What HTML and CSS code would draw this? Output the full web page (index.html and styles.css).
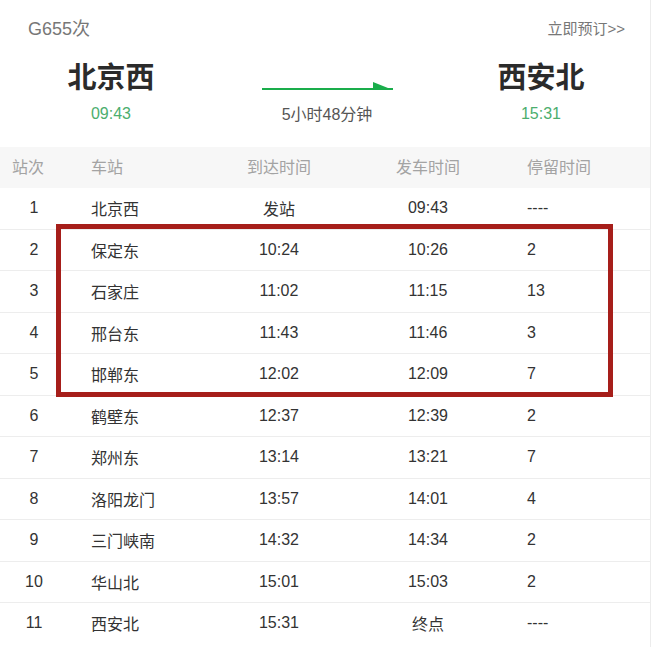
FILE: index.html
```html
<!DOCTYPE html>
<html lang="zh-CN">
<head>
    <meta charset="UTF-8">
    <meta name="viewport" content="width=device-width, initial-scale=1.0">
    <title>G655次 时刻表</title>
    <link rel="stylesheet" href="styles.css">
</head>
<body>
    <div class="panel">
        <div class="top-bar">
            <span class="train-no">G655次</span>
            <a class="book-link" href="#">立即预订&gt;&gt;</a>
        </div>

        <div class="route">
            <div class="station">
                <div class="station-name">北京西</div>
                <div class="station-time">09:43</div>
            </div>
            <div class="route-middle">
                <svg class="arrow" width="132" height="9" viewBox="0 0 132 9">
                    <rect x="0" y="6" width="131" height="2" fill="#1aad4b"/>
                    <polygon points="111,0 111,8 131,8" fill="#1aad4b"/>
                </svg>
                <div class="duration">5小时48分钟</div>
            </div>
            <div class="station">
                <div class="station-name">西安北</div>
                <div class="station-time">15:31</div>
            </div>
        </div>

        <div class="table-wrap">
            <table class="stops">
                <colgroup>
                    <col class="c-no">
                    <col class="c-name">
                    <col class="c-arr">
                    <col class="c-dep">
                    <col class="c-stay">
                </colgroup>
                <thead>
                    <tr>
                        <th class="no">站次</th>
                        <th class="name">车站</th>
                        <th class="mid">到达时间</th>
                        <th class="mid">发车时间</th>
                        <th class="stay">停留时间</th>
                    </tr>
                </thead>
                <tbody>
                    <tr><td class="no">1</td><td class="name">北京西</td><td class="mid">发站</td><td class="mid">09:43</td><td class="stay">----</td></tr>
                    <tr><td class="no">2</td><td class="name">保定东</td><td class="mid">10:24</td><td class="mid">10:26</td><td class="stay">2</td></tr>
                    <tr><td class="no">3</td><td class="name">石家庄</td><td class="mid">11:02</td><td class="mid">11:15</td><td class="stay">13</td></tr>
                    <tr><td class="no">4</td><td class="name">邢台东</td><td class="mid">11:43</td><td class="mid">11:46</td><td class="stay">3</td></tr>
                    <tr><td class="no">5</td><td class="name">邯郸东</td><td class="mid">12:02</td><td class="mid">12:09</td><td class="stay">7</td></tr>
                    <tr><td class="no">6</td><td class="name">鹤壁东</td><td class="mid">12:37</td><td class="mid">12:39</td><td class="stay">2</td></tr>
                    <tr><td class="no">7</td><td class="name">郑州东</td><td class="mid">13:14</td><td class="mid">13:21</td><td class="stay">7</td></tr>
                    <tr><td class="no">8</td><td class="name">洛阳龙门</td><td class="mid">13:57</td><td class="mid">14:01</td><td class="stay">4</td></tr>
                    <tr><td class="no">9</td><td class="name">三门峡南</td><td class="mid">14:32</td><td class="mid">14:34</td><td class="stay">2</td></tr>
                    <tr><td class="no">10</td><td class="name">华山北</td><td class="mid">15:01</td><td class="mid">15:03</td><td class="stay">2</td></tr>
                    <tr><td class="no">11</td><td class="name">西安北</td><td class="mid">15:31</td><td class="mid">终点</td><td class="stay">----</td></tr>
                </tbody>
            </table>
            <!-- 标注框 -->
            <div class="highlight"></div>
        </div>
    </div>
</body>
</html>
```

FILE: styles.css
```css
/* 时刻表样式 */
body {
    margin: 0;
    padding: 0;
    background-color: #fff;
    font-family: "Liberation Sans", "Noto Sans CJK SC", sans-serif;
    color: #333;
}

.panel {
    width: 650px;
    border-right: 1px solid #ececec;
    min-height: 647px;
}

.top-bar {
    height: 54px;
    display: flex;
    justify-content: space-between;
    align-items: center;
    padding: 0 25px 4px 28px;
}

.train-no {
    font-size: 18px;
    color: #777;
}

.book-link {
    font-size: 15px;
    color: #777;
    text-decoration: none;
}

.route {
    display: grid;
    grid-template-columns: 222px 210px 218px;
    padding-top: 2px;
    height: 87px;
}

.station {
    text-align: center;
}

.station-name {
    font-size: 29px;
    font-weight: bold;
    line-height: 36px;
    color: #2b2b2b;
}

.station-time {
    margin-top: 6px;
    font-size: 16px;
    line-height: 24px;
    color: #4cae6e;
}

.route-middle {
    display: flex;
    flex-direction: column;
    align-items: center;
    padding-top: 22px;
}

.arrow {
    display: block;
    margin-left: 2px;
}

.duration {
    margin-top: 12px;
    font-size: 16px;
    line-height: 24px;
    color: #555;
}

.table-wrap {
    position: relative;
}

.stops {
    width: 650px;
    border-collapse: collapse;
    table-layout: fixed;
    font-size: 16px;
}

.c-no { width: 68px; }
.c-name { width: 147px; }
.c-arr { width: 128px; }
.c-dep { width: 170px; }
.c-stay { width: 137px; }

.stops th {
    height: 37px;
    padding: 0 0 4px 0;
    background-color: #f7f7f7;
    color: #a3a3a3;
    font-weight: normal;
}

.stops td {
    height: 40.5px;
    padding: 0;
    border-bottom: 1px solid #ededed;
}

.stops tbody tr:last-child td {
    border-bottom: none;
}

.no {
    text-align: center;
}

.stops th.no {
    text-align: left;
    padding-left: 12px;
}

.name {
    text-align: left;
    padding-left: 23px !important;
}

.mid {
    text-align: center;
}

.stay {
    text-align: left;
    padding-left: 14px !important;
}

.highlight {
    position: absolute;
    left: 56px;
    top: 77px;
    width: 547px;
    height: 163px;
    border: 5px solid #a61e1a;
}
```
